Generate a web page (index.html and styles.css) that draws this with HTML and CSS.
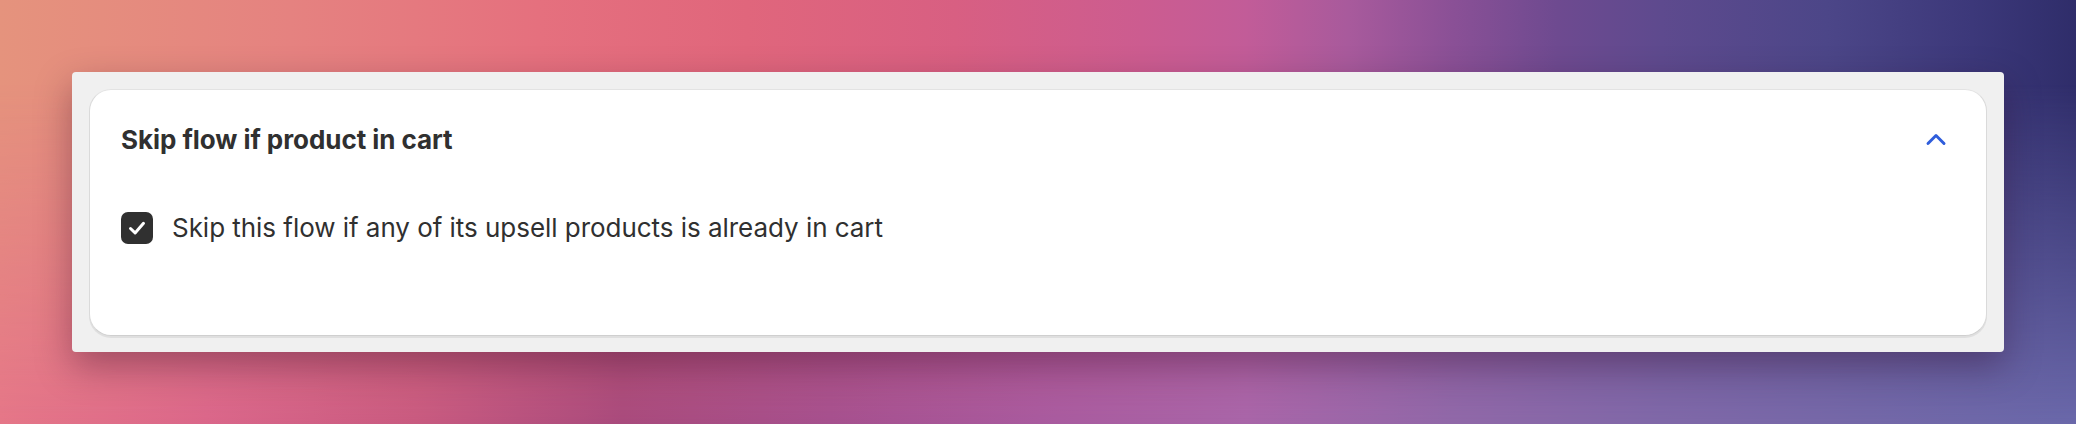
FILE: index.html
```html
<!DOCTYPE html>
<html lang="en">
<head>
    <meta charset="UTF-8">
    <meta name="viewport" content="width=device-width, initial-scale=1.0">
    <title>Skip flow if product in cart</title>
    <link rel="stylesheet" href="styles.css">
</head>
<body>
    <div class="panel">
        <div class="card">
            <div class="card-header">
                <h2>Skip flow if product in cart</h2>
                <button class="toggle" type="button" aria-label="Collapse">
                    <svg viewBox="0 0 20 20" width="40" height="40">
                        <path d="M14.53 12.28a.75.75 0 0 1-1.06 0l-3.47-3.47-3.47 3.47a.75.75 0 0 1-1.06-1.06l4-4a.75.75 0 0 1 1.06 0l4 4a.75.75 0 0 1 0 1.06Z"/>
                    </svg>
                </button>
            </div>
            <label class="check-row">
                <span class="checkbox">
                    <svg viewBox="0 0 32 32" width="32" height="32">
                        <path d="M9.5 16.5l4.6 4.4 8.4-9.6" />
                    </svg>
                </span>
                <span class="check-label">Skip this flow if any of its upsell products is already in cart</span>
            </label>
        </div>
    </div>
</body>
</html>
```

FILE: styles.css
```css
html, body {
    height: 100%;
}

body {
    margin: 0;
    padding: 72px;
    box-sizing: border-box;
    overflow: hidden;
    font-family: 'Inter', 'Noto Sans', sans-serif;
    color: #303030;
    background: linear-gradient(90deg, #e5937d 0%, #e58280 14%, #e5707e 26%, #e0667c 36%, #d85f82 46%, #cc5c90 55%, #c25c98 60%, #a85a9c 65%, #8a5096 70%, #6e4a90 75%, #5e4a8e 80%, #4c4688 88%, #3c387a 95%, #2f2d6a 100%);
    position: relative;
}

/* lighter, more violet band along the bottom edge */
body::before {
    content: "";
    position: absolute;
    inset: 0;
    background: linear-gradient(90deg, #e57688 0%, #da668a 10%, #c85a80 20%, #a84a7c 30%, #a5508e 40%, #a85a9e 50%, #a865a8 60%, #9068a8 70%, #8068a8 80%, #7468a8 90%, #6a68aa 100%);
    -webkit-mask-image: linear-gradient(to bottom, transparent 20%, #000 100%);
    mask-image: linear-gradient(to bottom, transparent 20%, #000 100%);
}

.panel {
    position: relative;
    z-index: 1;
    background-color: #f0f0f0;
    border-radius: 4px;
    padding: 17px 17px 16px;
    box-shadow: 0 14px 36px rgba(40, 0, 30, 0.35);
}

.card {
    background-color: #fff;
    border: 1px solid #e3e3e3;
    border-bottom-color: #cfcfcf;
    border-left-color: #dadada;
    border-right-color: #dadada;
    border-radius: 22px;
    box-shadow: 0 2px 0 rgba(0, 0, 0, 0.07);
    padding: 32px 30px 87px 31px;
}

.card-header {
    display: flex;
    align-items: center;
    justify-content: space-between;
    height: 36px;
}

.card-header h2 {
    margin: 0;
    font-size: 26px;
    font-weight: 650;
    line-height: 36px;
    letter-spacing: -0.05px;
    color: #303030;
}

.toggle {
    background: none;
    border: none;
    padding: 0;
    width: 40px;
    height: 40px;
    cursor: pointer;
}

.toggle svg {
    display: block;
    fill: #2f5ddb;
}

.check-row {
    display: flex;
    align-items: center;
    gap: 19px;
    height: 40px;
    margin-top: 50px;
}

.checkbox {
    width: 32px;
    height: 32px;
    border-radius: 7px;
    background-color: #303030;
    flex-shrink: 0;
}

.checkbox svg {
    display: block;
    fill: none;
    stroke: #fff;
    stroke-width: 3px;
    stroke-linecap: round;
    stroke-linejoin: round;
}

.check-label {
    font-size: 26px;
    line-height: 40px;
    letter-spacing: -0.04px;
    color: #303030;
}
```
